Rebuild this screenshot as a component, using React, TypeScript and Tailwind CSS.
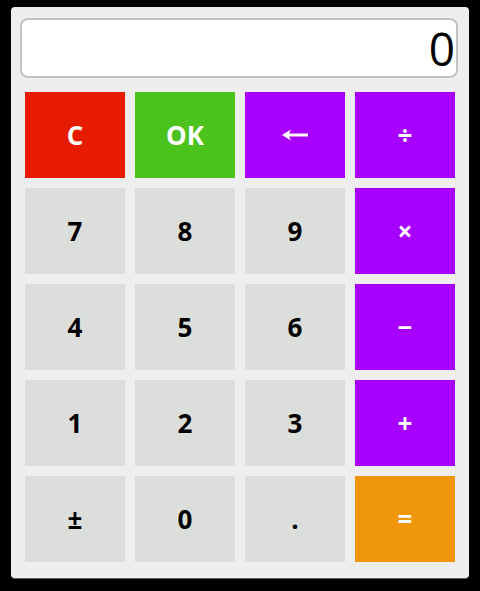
const Back = () => (
  <svg width="27" height="12" viewBox="0 0 27 12" fill="white">
    <path d="M0 6 L9 0.5 L7 4.5 H26 V7.5 H7 L9 11.5 Z" />
  </svg>
);

const keys = [
  { label: "C", cls: "bg-[#e61b00] text-white" },
  { label: "OK", cls: "bg-[#4cc21d] text-white" },
  { label: "back", cls: "bg-[#a800ff] text-white" },
  { label: "÷", cls: "bg-[#a800ff] text-white" },
  { label: "7", cls: "bg-[#dcdedb] text-black" },
  { label: "8", cls: "bg-[#dcdedb] text-black" },
  { label: "9", cls: "bg-[#dcdedb] text-black" },
  { label: "×", cls: "bg-[#a800ff] text-white" },
  { label: "4", cls: "bg-[#dcdedb] text-black" },
  { label: "5", cls: "bg-[#dcdedb] text-black" },
  { label: "6", cls: "bg-[#dcdedb] text-black" },
  { label: "−", cls: "bg-[#a800ff] text-white" },
  { label: "1", cls: "bg-[#dcdedb] text-black" },
  { label: "2", cls: "bg-[#dcdedb] text-black" },
  { label: "3", cls: "bg-[#dcdedb] text-black" },
  { label: "+", cls: "bg-[#a800ff] text-white" },
  { label: "±", cls: "bg-[#dcdedb] text-black" },
  { label: "0", cls: "bg-[#dcdedb] text-black" },
  { label: ".", cls: "bg-[#dcdedb] text-black" },
  { label: "=", cls: "bg-[#f0960a] text-white" },
];

export default function App() {
  return (
    <div className="h-[591px] bg-black pt-[7px] pl-[11px] font-['Open_Sans',sans-serif]">
      <div className="w-[458px] h-[570px] bg-[#eeeeee] rounded-[4px] shadow-[0_1px_0_#fafafa,0_2px_0_#555555] pt-[11px]">
        <div className="ml-[9px] w-[438px] h-[60px] bg-white border-2 border-[#c2c2c2] rounded-[8px] flex items-center justify-end pr-[1px] text-[46px] text-black leading-none">
          0
        </div>
        <div className="ml-[14px] mt-[14px] grid grid-cols-[repeat(4,100px)] auto-rows-[86px] gap-[10px]">
          {keys.map((k) => (
            <div
              key={k.label}
              className={`flex items-center justify-center font-bold text-[26px] ${k.cls}`}
            >
              {k.label === "back" ? <Back /> : k.label}
            </div>
          ))}
        </div>
      </div>
    </div>
  );
}
